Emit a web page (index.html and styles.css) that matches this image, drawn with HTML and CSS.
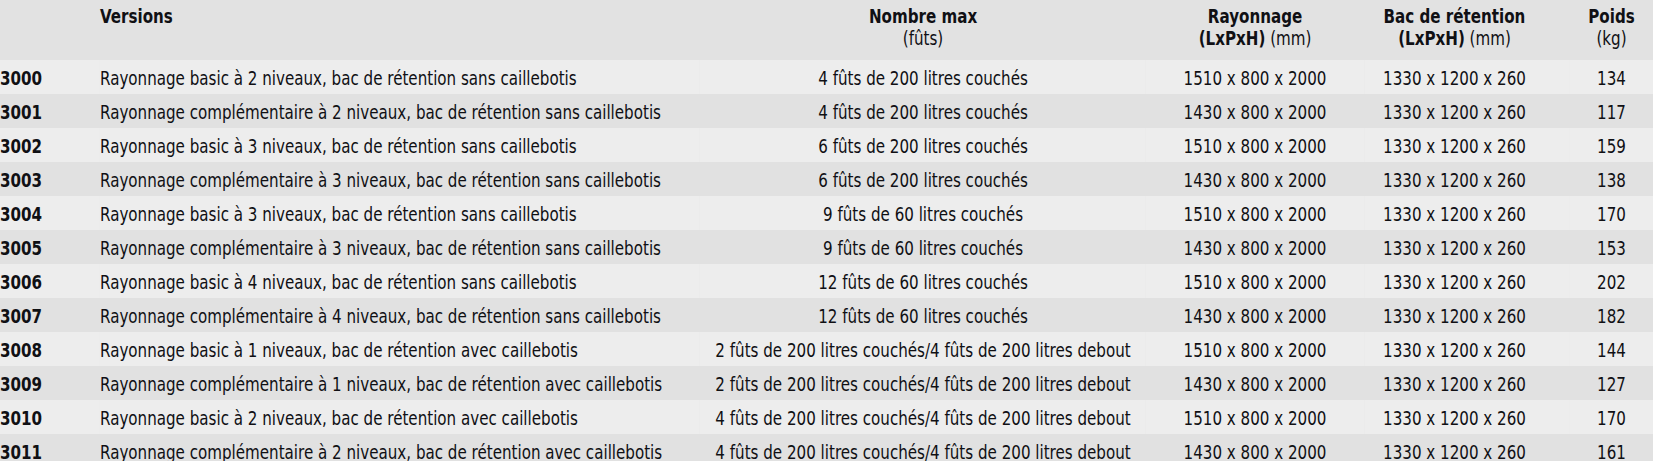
FILE: index.html
```html
<!DOCTYPE html>
<html lang="fr">
<head>
<meta charset="utf-8">
<title>Rayonnages</title>
<link rel="stylesheet" href="styles.css">
</head>
<body>
<div class="sheet">
<table class="spec">
  <colgroup>
    <col class="c-code">
    <col class="c-ver">
    <col class="c-nb">
    <col class="c-ray">
    <col class="c-bac">
    <col class="c-kg">
  </colgroup>
  <thead>
    <tr class="head">
      <th class="code"></th>
      <th class="ver"><b>Versions</b></th>
      <th class="ctr"><b>Nombre max</b><br>(fûts)</th>
      <th class="ctr"><b>Rayonnage</b><br><b>(LxPxH)</b> (mm)</th>
      <th class="ctr bac"><b>Bac de rétention</b><br><b>(LxPxH)</b> (mm)</th>
      <th class="ctr"><b>Poids</b><br>(kg)</th>
    </tr>
  </thead>
  <tbody>
    <tr><td class="code">3000</td><td class="ver">Rayonnage basic à 2 niveaux, bac de rétention sans caillebotis</td><td class="ctr">4 fûts de 200 litres couchés</td><td class="ctr">1510 x 800 x 2000</td><td class="ctr bac">1330 x 1200 x 260</td><td class="ctr">134</td></tr>
    <tr><td class="code">3001</td><td class="ver">Rayonnage complémentaire à 2 niveaux, bac de rétention sans caillebotis</td><td class="ctr">4 fûts de 200 litres couchés</td><td class="ctr">1430 x 800 x 2000</td><td class="ctr bac">1330 x 1200 x 260</td><td class="ctr">117</td></tr>
    <tr><td class="code">3002</td><td class="ver">Rayonnage basic à 3 niveaux, bac de rétention sans caillebotis</td><td class="ctr">6 fûts de 200 litres couchés</td><td class="ctr">1510 x 800 x 2000</td><td class="ctr bac">1330 x 1200 x 260</td><td class="ctr">159</td></tr>
    <tr><td class="code">3003</td><td class="ver">Rayonnage complémentaire à 3 niveaux, bac de rétention sans caillebotis</td><td class="ctr">6 fûts de 200 litres couchés</td><td class="ctr">1430 x 800 x 2000</td><td class="ctr bac">1330 x 1200 x 260</td><td class="ctr">138</td></tr>
    <tr><td class="code">3004</td><td class="ver">Rayonnage basic à 3 niveaux, bac de rétention sans caillebotis</td><td class="ctr">9 fûts de 60 litres couchés</td><td class="ctr">1510 x 800 x 2000</td><td class="ctr bac">1330 x 1200 x 260</td><td class="ctr">170</td></tr>
    <tr><td class="code">3005</td><td class="ver">Rayonnage complémentaire à 3 niveaux, bac de rétention sans caillebotis</td><td class="ctr">9 fûts de 60 litres couchés</td><td class="ctr">1430 x 800 x 2000</td><td class="ctr bac">1330 x 1200 x 260</td><td class="ctr">153</td></tr>
    <tr><td class="code">3006</td><td class="ver">Rayonnage basic à 4 niveaux, bac de rétention sans caillebotis</td><td class="ctr">12 fûts de 60 litres couchés</td><td class="ctr">1510 x 800 x 2000</td><td class="ctr bac">1330 x 1200 x 260</td><td class="ctr">202</td></tr>
    <tr><td class="code">3007</td><td class="ver">Rayonnage complémentaire à 4 niveaux, bac de rétention sans caillebotis</td><td class="ctr">12 fûts de 60 litres couchés</td><td class="ctr">1430 x 800 x 2000</td><td class="ctr bac">1330 x 1200 x 260</td><td class="ctr">182</td></tr>
    <tr><td class="code">3008</td><td class="ver">Rayonnage basic à 1 niveaux, bac de rétention avec caillebotis</td><td class="ctr">2 fûts de 200 litres couchés/4 fûts de 200 litres debout</td><td class="ctr">1510 x 800 x 2000</td><td class="ctr bac">1330 x 1200 x 260</td><td class="ctr">144</td></tr>
    <tr><td class="code">3009</td><td class="ver">Rayonnage complémentaire à 1 niveaux, bac de rétention avec caillebotis</td><td class="ctr">2 fûts de 200 litres couchés/4 fûts de 200 litres debout</td><td class="ctr">1430 x 800 x 2000</td><td class="ctr bac">1330 x 1200 x 260</td><td class="ctr">127</td></tr>
    <tr><td class="code">3010</td><td class="ver">Rayonnage basic à 2 niveaux, bac de rétention avec caillebotis</td><td class="ctr">4 fûts de 200 litres couchés/4 fûts de 200 litres debout</td><td class="ctr">1510 x 800 x 2000</td><td class="ctr bac">1330 x 1200 x 260</td><td class="ctr">170</td></tr>
    <tr><td class="code">3011</td><td class="ver">Rayonnage complémentaire à 2 niveaux, bac de rétention avec caillebotis</td><td class="ctr">4 fûts de 200 litres couchés/4 fûts de 200 litres debout</td><td class="ctr">1430 x 800 x 2000</td><td class="ctr bac">1330 x 1200 x 260</td><td class="ctr">161</td></tr>
  </tbody>
</table>
</div>
</body>
</html>
```

FILE: styles.css
```css
html, body {
  margin: 0;
  padding: 0;
  background: #e2e2e2;
  overflow: hidden;
}

/* The reference uses a condensed face; DejaVu Sans Condensed is narrowed
   horizontally to the same set width. */
.sheet {
  width: 1653px;
  height: 461px;
  overflow: hidden;
}

.spec {
  border-collapse: collapse;
  table-layout: fixed;
  width: 1967.85px;
  transform: scaleX(0.84);
  transform-origin: 0 0;
  font-family: "DejaVu Sans Condensed", "DejaVu Sans", "Liberation Sans", sans-serif;
  font-stretch: condensed;
  font-size: 20px;
  color: #101014;
}

.c-code { width: 119.05px; }
.c-ver { width: 714.3px; }
.c-nb { width: 531px; }
.c-ray { width: 259.5px; }
.c-bac { width: 245.2px; }
.c-kg { width: 98.8px; }

.spec th,
.spec td {
  padding: 0;
  white-space: nowrap;
  overflow: visible;
}

.head {
  height: 60px;
  background: #e2e2e2;
}

.head th {
  vertical-align: top;
  font-weight: normal;
  line-height: 22px;
  padding-top: 5px;
  height: 55px;
  box-sizing: content-box;
}

.spec b {
  font-weight: bold;
}

.spec tbody tr {
  height: 34px;
}

.spec tbody tr:nth-child(odd) {
  background: #ededed;
}

.spec tbody tr:nth-child(even) {
  background: #e1e1e1;
}

.spec td {
  line-height: 32px;
  padding-top: 2px;
  vertical-align: top;
}

.code {
  text-align: left;
  font-weight: bold;
}

.ver {
  text-align: left;
}

.ctr {
  text-align: center;
}

.bac {
  padding-right: 29.8px !important;
}
```
